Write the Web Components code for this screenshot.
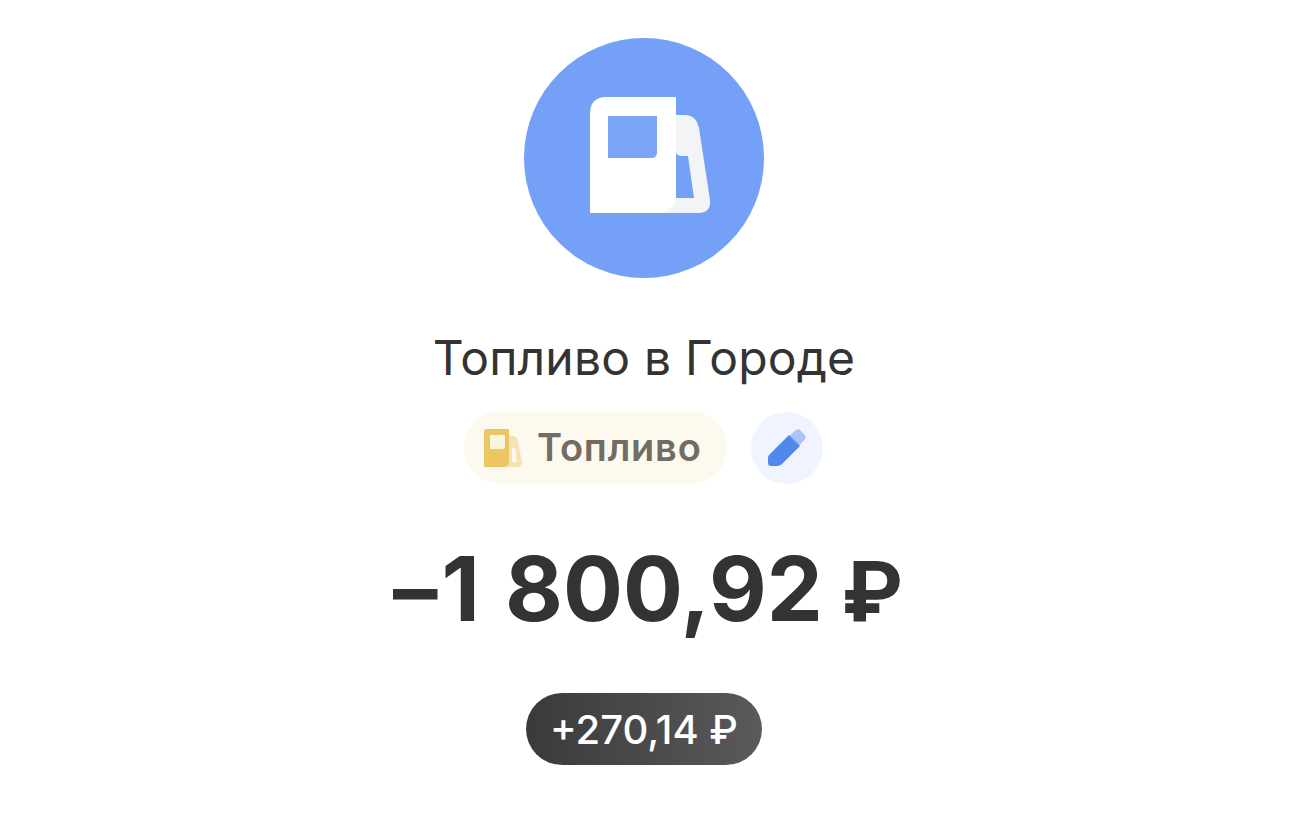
<!DOCTYPE html>
<html lang="ru"><head><meta charset="utf-8"><title>Топливо</title>
<style>
html,body{margin:0;background:#fff;height:100%}
body{font-family:Inter,Roboto,"Noto Sans",sans-serif;color:#333}
.a-lead{letter-spacing:4px}
.a-cur{font-family:Roboto,Inter,sans-serif;font-size:85px;line-height:0;margin-left:-1px}
</style></head><body>
<template id="t-op">
<style>
:host{display:flex;flex-direction:column;align-items:center;width:1288px;height:825px;padding-top:38px;box-sizing:border-box;overflow:hidden}
.title{margin-top:52px;font-size:48px;line-height:56px;font-weight:400;color:#333;letter-spacing:.2px;white-space:nowrap}
.row{margin-top:25px;margin-right:1px;display:flex;gap:24px;align-items:center;height:73px}
.amount{margin-top:55px;padding-left:8px;height:100px;font-size:89px;line-height:100px;font-weight:700;color:#333;white-space:nowrap}
.cash{margin-top:54px}
</style>
<fuel-avatar></fuel-avatar>
<div class="title"><slot name="title"></slot></div>
<div class="row"><category-chip><slot name="cat"></slot></category-chip><edit-button></edit-button></div>
<div class="amount"><slot name="amount"></slot></div>
<div class="cash"><cash-pill><slot name="cash"></slot></cash-pill></div>
</template>
<template id="t-av">
<style>:host{display:block;width:240px;height:240px}svg{display:block}</style>
<svg width="240" height="240" viewBox="0 0 240 240">
<circle cx="120" cy="120" r="120" fill="#74a1f7"/>
<path fill-rule="evenodd" fill="#f3f4f6" d="M145 77H161C169 77 173 82 175 90L186 162C187 170 183 175 175 175H130V77ZM152 115V160H170L164 118H158C155 118 153 117 152 115Z"/>
<path fill="#fff" d="M82 59H152V155C152 167 146 175 134 175H66V75C66 65 72 59 82 59Z"/>
<path fill="#7ba6f8" d="M84 78H133V114C133 118 131 120 127 120H84Z"/>
</svg>
</template>
<template id="t-chip">
<style>
:host{display:flex;align-items:center;box-sizing:border-box;width:263px;height:73px;border-radius:37px;background:#fef9ee;padding-left:20px;gap:15px;font-size:38px;font-weight:600;color:#716d64;letter-spacing:.8px;white-space:nowrap}
svg{flex:none;display:block}
span{padding-bottom:2px}
</style>
<svg width="38" height="38" viewBox="0 0 38 38">
<path fill="#f5e3b4" fill-rule="evenodd" d="M22 7H29C32 7 33 9 34 12L38 33C38 36 36 38 33 38H22ZM28 19V33H33L31 19Z"/>
<path fill="#ecc662" d="M3 0H25V32C25 36 23 38 20 38H0V3C0 1 1 0 3 0Z"/>
<path fill="#fbf3dc" d="M6 6H21V17C21 19 20 20 18 20H6Z"/>
</svg>
<span><slot></slot></span>
</template>
<template id="t-edit">
<style>:host{display:block;width:72px;height:72px}svg{display:block}</style>
<svg width="72" height="72" viewBox="0 0 72 72">
<circle cx="36" cy="36" r="36" fill="#f0f4fe"/>
<path fill="#a9c3f8" d="M36 26L45 18C46 17 48 17 49 18L54 23C55 24 55 26 54 27L46 36Z"/>
<path fill="#5088ed" d="M38 23L49 34L31 52C30 53 28 54 26 54H20C18 54 17 53 17 51V46C17 44 18 43 19 42Z"/>
</svg>
</template>
<template id="t-cash">
<style>
:host{display:flex;align-items:center;justify-content:center;width:236px;height:72px;border-radius:36px;background:linear-gradient(90deg,#3a3a3a,#5a5a5a);color:#fff;font-size:40px;font-weight:500;white-space:nowrap}
</style>
<slot></slot>
</template>
<fuel-operation>
<span slot="title">Топливо в Городе</span>
<span slot="cat">Топливо</span>
<span slot="amount"><span class="a-lead">–1</span> 800,92 <span class="a-cur">₽</span></span>
<span slot="cash">+270,14 ₽</span>
</fuel-operation>
<script>
function def(name,tpl){customElements.define(name,class extends HTMLElement{constructor(){super();this.attachShadow({mode:'open'}).appendChild(document.getElementById(tpl).content.cloneNode(true));}});}
def('fuel-avatar','t-av');def('category-chip','t-chip');def('edit-button','t-edit');def('cash-pill','t-cash');def('fuel-operation','t-op');
</script>
</body></html>
